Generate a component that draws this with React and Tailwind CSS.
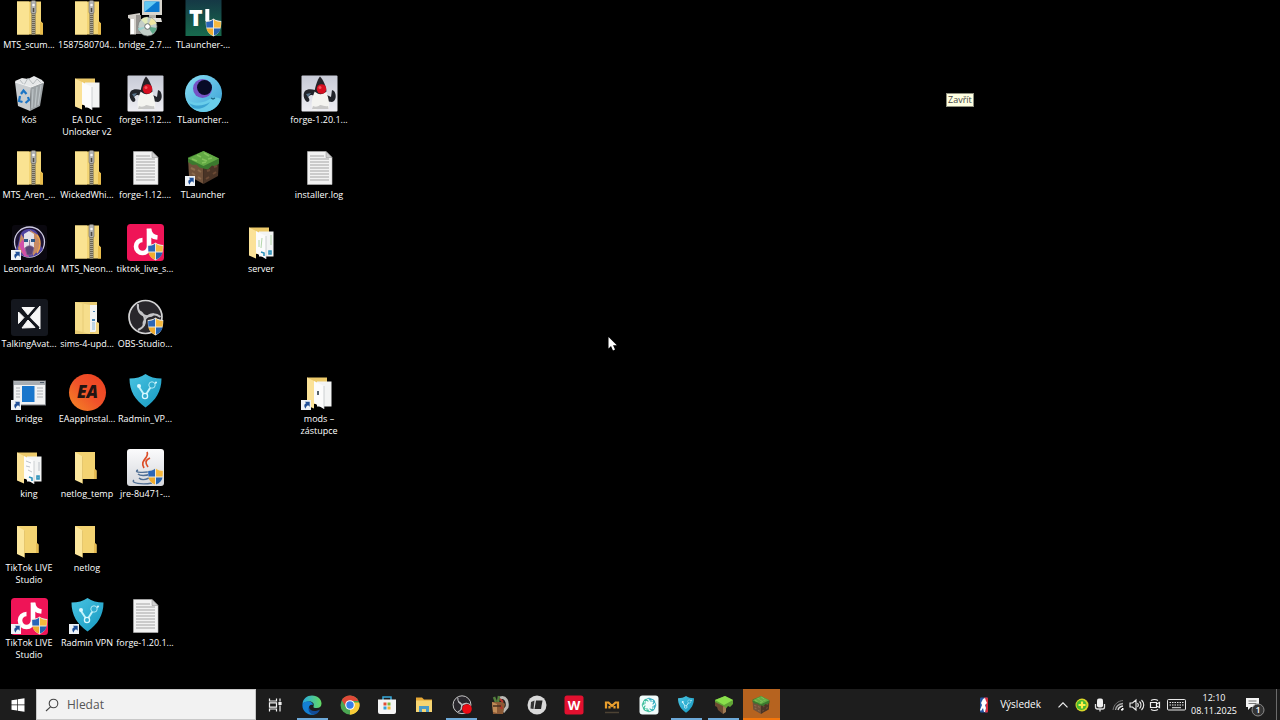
import { useState } from "react"

const Shield = () => (
    <g>
        <path d="M28.5 18.500c2.500 1.800 4.800 2.400 7.800 2.400 0 6.600-.8 11.800-7.800 15.600-7-3.800-7.800-9-7.800-15.600 3 0 5.300-.6 7.800-2.400z" fill="#e9e6dc" />
        <path d="M28 19.800v7.700h-6.600c-.2-1.700-.2-3.600-.2-5.500 2.600 0 4.800-.8 6.800-2.200z" fill="#2a66b8" />
        <path d="M29 19.800v7.700h6.600c.2-1.700.2-3.600.2-5.500-2.600 0-4.800-.8-6.800-2.200z" fill="#f5b83d" />
        <path d="M28 35.600v-7.100h-6.500c.7 3.200 2.500 5.400 6.500 7.100z" fill="#f0ac2e" />
        <path d="M29 35.600v-7.100h6.500c-.7 3.200-2.500 5.400-6.500 7.100z" fill="#2461ad" />
    </g>
)

const Shortcut = () => (
    <g>
        <rect x="0" y="26" width="10" height="10" fill="#eef2f6" />
        <path d="M3.800 27.800h4.900v4.900l-1.600-1.500c-1.400.6-2.200 1.600-2.400 3.600-2.200-2.600-1.600-4.800.6-5.500z" fill="#1f4f97" />
    </g>
)

const Zip = () => (
    <g>
        <path d="M6 1.500h24v20l2 2v11H6z" fill="#f3d575" />
        <path d="M6 1.500h12v33H6z" fill="#fae392" />
        <path d="M30 21.500l2 2v11h-3v-12z" fill="#e9bd4c" />
        <path d="M22.500 8v26.500" stroke="#6d6654" strokeWidth="4" />
        <path d="M22.500 8v26.500" stroke="#a9a593" strokeWidth="3" strokeDasharray="1 1" />
        <rect x="20" y="0.500" width="5" height="13" rx="1.500" fill="#b4b4b2" stroke="#68655e" strokeWidth="0.600" />
        <circle cx="22.500" cy="5" r="1.300" fill="#f5f5f5" />
        <rect x="21.700" y="8" width="1.600" height="4" fill="#4c4944" />
    </g>
)

const Folder = () => (
    <g>
        <path d="M6 3h20v17l1.500 1.500V30H12z" fill="#f3d372" />
        <path d="M25 20l2.500 1.500V30H25z" fill="#e5bb52" />
        <path d="M6 3l7.500 4.500v27L6 31z" fill="#fce79d" />
        <path d="M13.500 7.500v27" stroke="#dab95d" strokeWidth="0.600" />
    </g>
)

const FolderDocs = ({ kind }) => (
    <g>
        <path d="M6 3.500h20V30H6z" fill="#edca6b" />
        <path d="M16 7.500h14.500v25H16z" fill="#f3f4f4" />
        <path d="M13 7l10 5v23l-10-6z" fill="#fcfcfc" />
        <path d="M23 12v23" stroke="#b9bdc0" strokeWidth="0.700" />
        <path d="M6 3.500L13 7v27.500L6 31.500z" fill="#fbe298" />
        {kind == 'server' &&
            <g>
                <path d="M16 16v7M19 14l-1 10M28 11v10" stroke="#9fcb94" strokeWidth="0.800" />
                <path d="M18 28l3 1v3M26 27h2v3h-2z" stroke="#2f93bb" strokeWidth="1.600" fill="none" />
            </g>
        }
        {kind == 'king' &&
            <g>
                <path d="M15 12l5 2M15 17l4 1M17 21l4 2M28 13v9" stroke="#adb5bd" strokeWidth="0.800" />
                <path d="M18 28l3 1v3M26 27h2v3h-2z" stroke="#2f93bb" strokeWidth="1.600" fill="none" />
            </g>
        }
        {kind == 'mods' && <path d="M16 17h2v4h-2z" fill="#58636b" />}
    </g>
)

const FolderSims = () => (
    <g>
        <path d="M6 3h22v20l2 1v11H6z" fill="#e7cb73" />
        <path d="M21 6h7v27h-7z" fill="#f3f4f2" />
        <path d="M23 20h3v2h-3zM24 12h2v1h-2z" fill="#4a86b7" />
        <path d="M23 23h3v8h-3z" fill="#bfd5e4" />
        <path d="M6 3l15 3v29L6 31z" fill="#f6de8c" />
        <path d="M14 5v28" stroke="#e2c56d" strokeWidth="0.700" />
        <path d="M27 23l3 1.500V35h-6l3-3z" fill="#f0d47e" />
    </g>
)

const Page = () => (
    <g>
        <path d="M6.500 1.500h18.500l6 6v27h-24.500z" fill="#f2f2f2" stroke="#b9b9b9" strokeWidth="0.600" />
        <path d="M25 1.500v6h6z" fill="#d0d0d0" stroke="#8d8d8d" strokeWidth="0.500" />
        <path d="M9 6h14M9 9h19M9 12h19M9 15h19M9 18h19M9 21h19M9 24h19M9 27h19M9 30h19" stroke="#9b9b9b" strokeWidth="0.900" />
    </g>
)

const Setup = () => (
    <g>
        <rect x="15" y="0" width="20" height="15" fill="#d8d5cd" />
        <rect x="17.500" y="1.500" width="15" height="10.500" fill="#0b79cf" />
        <path d="M17.500 12V1.500H30z" fill="#62c8f2" />
        <path d="M22 15h7v3h-7z" fill="#b0ada6" />
        <path d="M16 18h18l1 4H15z" fill="#e2e0da" />
        <path d="M1 15l12-2v5l-4 1v15.500H3V19l-2-1z" fill="#d2cfc9" />
        <path d="M4 19h3v15H4z" fill="#ffffff" />
        <path d="M9 15h5v19H9z" fill="#96938f" />
        <circle cx="20.500" cy="26.500" r="9.500" fill="#c3cec8" stroke="#707774" strokeWidth="0.600" />
        <path d="M20.500 26.500L14 19.500a9.500 9.500 0 0 1 6.500-2.500z" fill="#e3ecb9" />
        <path d="M20.500 26.500l9-3a9.500 9.500 0 0 0-5-5.600z" fill="#efe7a2" />
        <path d="M20.500 26.500l9.200 1.600a9.500 9.500 0 0 1-4 6z" fill="#5fa98a" />
        <path d="M20.500 26.500L12 31a9.500 9.500 0 0 1-1-3z" fill="#9ad1cd" />
        <circle cx="20.500" cy="26.500" r="2.800" fill="#ffffff" stroke="#67706a" />
    </g>
)

const TLauncherDark = () => (
    <g>
        <defs>
            <linearGradient id="tlDark" x1="0" y1="0" x2="0" y2="1">
                <stop offset="0" stopColor="#153745" />
                <stop offset="1" stopColor="#176a4d" />
            </linearGradient>
        </defs>
        <rect x="0.500" y="-1" width="36" height="37" fill="url(#tlDark)" />
        <text x="4" y="26" className="font-['Open_Sans'] text-[23px] font-extrabold" fill="#ffffff">T</text>
        <path d="M20.300 9h4v12h-4z" fill="#ffffff" />
        <Shield />
    </g>
)

const Bin = () => (
    <g>
        <path d="M4 6l7-3 6 1 6-3 8 4 2 3-4 5H9z" fill="#e6e8e9" />
        <path d="M9 5l4 5 4-7 5 6 4-5 5 5" stroke="#a9b0b3" strokeWidth="0.800" fill="none" />
        <path d="M4 7l16 5-1 24-12-5z" fill="#c9cdd0" />
        <path d="M20 12l13-5-4 24-10 5z" fill="#9da3a6" />
        <path d="M22 14l-1 19M26 12l-2 20M30 10l-3 20" stroke="#bdc4c7" strokeWidth="1.200" />
        <path d="M4 7l16 5 13-5" stroke="#f2f3f3" fill="none" />
        <path d="M10 19l2.500-3.500 3 3.500M9 21l-1 5 3.500 1M17 22l1 3-3.500 3" stroke="#1b74c5" strokeWidth="2.200" fill="none" />
    </g>
)

const Duke = () => (
    <g>
        <defs>
            <linearGradient id="dukeBg" x1="0" y1="0" x2="0" y2="1">
                <stop offset="0" stopColor="#c7cad6" />
                <stop offset="1" stopColor="#eeeef3" />
            </linearGradient>
        </defs>
        <rect x="0.500" y="0.500" width="36" height="36" rx="1" fill="url(#dukeBg)" />
        <path d="M14 15c-4-1-8-1-10 1-2 2-2 8 2 11 3 0 3-3 1-5 3-3 5-2 8 0zM24 19l6 3 1-7 2 1c3 4 2 10-2 11l-7-1z" fill="#22242a" />
        <path d="M5 19l5-1-3 4z" fill="#58748c" />
        <path d="M14 16c-3 6-4 13-3 18 2 2 5 1 7-1 3-1 5 2 10 1 1-5-1-13-3-18z" fill="#f4f4f0" />
        <path d="M19 1.500c3 3 6 9 6.500 15-5 4-8 3-12 0 1-6 3-12 5.500-15z" fill="#242329" />
        <path d="M12 31c2 1 5 1 7-1 3 0 5 2 8 1l.500 3H11z" fill="#c8c8c7" />
        <circle cx="20.500" cy="14" r="4.800" fill="#d80f20" />
        <circle cx="19" cy="12.500" r="1.500" fill="#f4525a" />
    </g>
)

const TLauncherRing = () => (
    <g>
        <defs>
            <linearGradient id="ringBg" x1="0" y1="0" x2="1" y2="1">
                <stop offset="0" stopColor="#8be0f4" />
                <stop offset="1" stopColor="#379fd6" />
            </linearGradient>
        </defs>
        <circle cx="18.500" cy="18.500" r="18.500" fill="url(#ringBg)" />
        <path d="M1 23c5 6 15 6 22 2 5-3 9-3 13-1-2 7-9 13-17.500 13C10 37 3 31 1 23z" fill="#69cdea" />
        <path d="M4 28c7 4 15 3 21-1-4 6-11 8-17 6z" fill="#3ba4d3" />
        <circle cx="17.500" cy="13.500" r="9.500" fill="#7552c4" />
        <circle cx="19.500" cy="12.500" r="7.500" fill="#080b26" />
        <path d="M26 23l2 1 2-1" stroke="#176482" strokeWidth="1.200" fill="none" />
    </g>
)

const Block = () => (
    <g>
        <path d="M3 9l15.500 7v18L4 26z" fill="#70513a" />
        <path d="M34 9l-15.500 7v18L33 26z" fill="#4a3426" />
        <path d="M18.500 1L34 8.500v5l-4 3-3-1-4 4-4.500-1-4-1-3-3-4 .5-4.500-3v-4.500z" fill="#3b792e" />
        <path d="M18.500 1L34 8.500 18.500 16 3 8.500z" fill="#62a944" />
        <path d="M12 5l4 2M19 3l5 3M7 9l5 2M17 9l5 2M23 9l4-1M17 13l4-1" stroke="#83c35c" strokeWidth="1.500" />
        <path d="M6 18l4 2M13 20l3 2M7 23l3 2M13 27l3 2" stroke="#8b6a4c" strokeWidth="2" />
        <path d="M22 21l3-1M29 17l3-1M21 29l3-2M28 24l3-2" stroke="#6b4a34" strokeWidth="2" />
    </g>
)

const Leonardo = () => (
    <g>
        <rect x="1" y="1" width="35" height="35" rx="3" fill="#0a080f" />
        <circle cx="18.500" cy="18" r="15" fill="#1d1434" stroke="#cfcce2" strokeWidth="1.300" />
        <path d="M18 5c-7 0-9 5-10 11-1 5-2 8-4 10 4 5 9 7 14 7 6 0 11-3 14-8-3-3-3-7-4-11-1-6-4-9-10-9z" fill="#4f43a1" />
        <path d="M10 10l-3 15 6 6 1-15zM19 6l8 5 2 13-7 8-1-18z" fill="#c78b64" />
        <path d="M8 21l5 11 5 1-6-18z" fill="#d24fa9" />
        <path d="M13 10l5-3 5 3v13l-5 8-5-8z" fill="#e3e0e8" />
        <path d="M13 15h4v3h-4zM20 15h4v3h-4z" fill="#2e5888" />
        <path d="M18.500 16v6M14 24c3-3 6-3 9 0l-2 7h-5z" fill="#594375" stroke="#866b8e" strokeWidth="0.800" />
        <path d="M26 11c4 5 4 12 0 18" stroke="#eda54f" strokeWidth="1.500" fill="none" />
    </g>
)

const TikTok = () => (
    <g>
        <rect width="37" height="37" rx="3.500" fill="#ef1457" />
        <path d="M22 4.500v18a6.500 6.500 0 1 1-6.500-6.500" stroke="#ffffff" strokeWidth="4.600" fill="none" />
        <path d="M22 5c.5 5.500 3 8 8.500 8.500" stroke="#ffffff" strokeWidth="4.600" fill="none" />
        <Shield />
    </g>
)

const Avatar = () => (
    <g>
        <rect width="37" height="37" rx="3" fill="#14171e" />
        <path d="M29 7v23l-10-11.500zM7.500 13l5.500 5.500-5.500 6zM11 8.500l13 0-7 7.500zM11 29l13-.5-7-7.500z" fill="#f7f7f7" stroke="#f7f7f7" strokeLinejoin="round" />
        <path d="M8 9l20 20M27 6L8 28" stroke="#14171e" strokeWidth="1.800" />
    </g>
)

const lobes = [0, 120, 240]

const Obs = () => (
    <g>
        <circle cx="18.500" cy="18" r="16.500" fill="#29272c" stroke="#d4d4d5" strokeWidth="1.700" />
        {lobes.map((angle) => (
            <path key={angle} transform={`rotate(${angle} 18.5 18)`} d="M11 5c-1 6 2 11 8 12 3 .6 6 0 8-2" stroke="#c4c4c7" strokeWidth="2" fill="none" />
        ))}
    </g>
)

const Bridge = () => (
    <g>
        <rect x="2.500" y="7" width="32" height="24" fill="#f1f2f3" stroke="#777b80" />
        <path d="M3 9.500h31" stroke="#a8adb2" strokeWidth="3" />
        <path d="M29 8.500h4" stroke="#4d5968" />
        <rect x="11" y="12" width="12.500" height="16" fill="#1976cc" />
        <path d="M5 14h4M5 17h4M5 20h4M5 23h4M26 14h6M26 17h6M26 20h6M26 23h6" stroke="#aeb1b5" />
    </g>
)

const Ea = () => (
    <g>
        <defs>
            <linearGradient id="eaBg" x1="0" y1="1" x2="1" y2="0">
                <stop offset="0" stopColor="#f58a24" />
                <stop offset="0.500" stopColor="#f0522a" />
                <stop offset="1" stopColor="#ec4120" />
            </linearGradient>
        </defs>
        <circle cx="18.500" cy="18.500" r="18.500" fill="url(#eaBg)" />
        <text x="18.500" y="24" textAnchor="middle" className="font-['Open_Sans'] text-[17px] font-extrabold italic" fill="#211413">EA</text>
    </g>
)

const Radmin = () => (
    <g>
        <defs>
            <linearGradient id="radminBg" x1="0" y1="0" x2="1" y2="1">
                <stop offset="0" stopColor="#49c4e2" />
                <stop offset="1" stopColor="#1698c0" />
            </linearGradient>
        </defs>
        <path d="M18.500 0C23 3 28 4.500 34.500 4.500c0 13-6 22-16 29C8 26 2.500 17 2.500 4.500 9 4.500 14 3 18.500 0z" fill="url(#radminBg)" />
        <path d="M12 13l6 9 7-11" stroke="#c2f3fb" strokeWidth="2" fill="none" />
        <path d="M25 11l4-2" stroke="#c2f3fb" />
        <circle cx="12" cy="12" r="2" fill="#dcf9ff" />
        <circle cx="25" cy="11" r="3.200" fill="#30accf" stroke="#b2eaf5" />
        <circle cx="18" cy="22" r="2.600" fill="#30accf" stroke="#dcf9ff" strokeWidth="1.300" />
        <circle cx="29" cy="8.500" r="1" fill="#dcf9ff" />
    </g>
)

const Java = () => (
    <g>
        <defs>
            <linearGradient id="javaBg" x1="0" y1="0" x2="0" y2="1">
                <stop offset="0" stopColor="#fbfbfc" />
                <stop offset="1" stopColor="#d5d7dc" />
            </linearGradient>
        </defs>
        <rect width="37" height="37" rx="3" fill="url(#javaBg)" />
        <path d="M20 3c3 6-8 8-3 16M23 9c-5 2-5 5-2 9" stroke="#dc4d27" strokeWidth="1.700" fill="none" />
        <path d="M11 21c-6 3 8 3 14 1M11 25c2 2 8 2 12 0M12 29c2 2 6 2 10 0M7 31c-4 3 8 5 18 3M25 21c5-1 4 4-1 5" stroke="#516f94" strokeWidth="1.400" fill="none" />
        <Shield />
    </g>
)

const desktop = [
    { name: 'MTS_scum...', at: 'col-start-1 row-start-1', icon: <Zip /> },
    { name: 'Koš', at: 'col-start-1 row-start-2', icon: <Bin /> },
    { name: 'MTS_Aren_...', at: 'col-start-1 row-start-3', icon: <Zip /> },
    { name: 'Leonardo.AI', at: 'col-start-1 row-start-4', icon: <Leonardo />, shortcut: true },
    { name: 'TalkingAvat...', at: 'col-start-1 row-start-5', icon: <Avatar /> },
    { name: 'bridge', at: 'col-start-1 row-start-6', icon: <Bridge />, shortcut: true },
    { name: 'king', at: 'col-start-1 row-start-7', icon: <FolderDocs kind="king" /> },
    { name: 'TikTok LIVE Studio', at: 'col-start-1 row-start-8', icon: <Folder /> },
    { name: 'TikTok LIVE Studio', at: 'col-start-1 row-start-9', icon: <TikTok />, shortcut: true },
    { name: '1587580704...', at: 'col-start-2 row-start-1', icon: <Zip /> },
    { name: 'EA DLC Unlocker v2', at: 'col-start-2 row-start-2', icon: <FolderDocs /> },
    { name: 'WickedWhi...', at: 'col-start-2 row-start-3', icon: <Zip /> },
    { name: 'MTS_Neon...', at: 'col-start-2 row-start-4', icon: <Zip /> },
    { name: 'sims-4-upd...', at: 'col-start-2 row-start-5', icon: <FolderSims /> },
    { name: 'EAappInstal...', at: 'col-start-2 row-start-6', icon: <Ea /> },
    { name: 'netlog_temp', at: 'col-start-2 row-start-7', icon: <Folder /> },
    { name: 'netlog', at: 'col-start-2 row-start-8', icon: <Folder /> },
    { name: 'Radmin VPN', at: 'col-start-2 row-start-9', icon: <Radmin />, shortcut: true },
    { name: 'bridge_2.7....', at: 'col-start-3 row-start-1', icon: <Setup /> },
    { name: 'forge-1.12....', at: 'col-start-3 row-start-2', icon: <Duke /> },
    { name: 'forge-1.12....', at: 'col-start-3 row-start-3', icon: <Page /> },
    { name: 'tiktok_live_s...', at: 'col-start-3 row-start-4', icon: <TikTok /> },
    { name: 'OBS-Studio...', at: 'col-start-3 row-start-5', icon: <><Obs /><Shield /></> },
    { name: 'Radmin_VP...', at: 'col-start-3 row-start-6', icon: <Radmin /> },
    { name: 'jre-8u471-...', at: 'col-start-3 row-start-7', icon: <Java /> },
    { name: 'forge-1.20.1...', at: 'col-start-3 row-start-9', icon: <Page /> },
    { name: 'TLauncher-...', at: 'col-start-4 row-start-1', icon: <TLauncherDark /> },
    { name: 'TLauncher...', at: 'col-start-4 row-start-2', icon: <TLauncherRing /> },
    { name: 'TLauncher', at: 'col-start-4 row-start-3', icon: <Block />, shortcut: true },
    { name: 'server', at: 'col-start-5 row-start-4', icon: <FolderDocs kind="server" /> },
    { name: 'forge-1.20.1...', at: 'col-start-6 row-start-2', icon: <Duke /> },
    { name: 'installer.log', at: 'col-start-6 row-start-3', icon: <Page /> },
    { name: 'mods – zástupce', at: 'col-start-6 row-start-6', icon: <FolderDocs kind="mods" />, shortcut: true },
]

const DesktopItem = ({ item }) => (
    <button className={`flex flex-col items-center justify-start ${item.at}`}>
        <svg className="size-[37px] shrink-0 overflow-visible" viewBox="0 0 37 37" aria-hidden="true">
            {item.icon}
            {item.shortcut && <Shortcut />}
        </svg>
        <span className="mt-0.5 max-w-[58px] text-center text-[9px] leading-[12px] font-medium text-white">{item.name}</span>
    </button>
)

const EdgeIcon = () => (
    <g>
        <defs>
            <linearGradient id="edgeTop" x1="0" y1="0" x2="1" y2="0">
                <stop offset="0" stopColor="#28a9e1" />
                <stop offset="1" stopColor="#64dc62" />
            </linearGradient>
        </defs>
        <path d="M.5 9C1 3.500 5 .5 10 .5c6 0 9.500 4 9.500 8 0 3-2 4.500-5 4.500-2 0-3.500-.6-3-1.600 1-2.400-.5-5-4-5C4 6.400 1.500 7.500.5 9z" fill="url(#edgeTop)" />
        <path d="M.5 9C3 5 10.500 5.500 11 10c-3-1-4.500 1-4 4 .5 3 3 5 6 5.500C6 21-.5 16 .5 9z" fill="#1480d3" />
        <path d="M7 12c1 4 5 5.500 11 2.500-1 3-4 5-6 5-4 0-6.500-4-5-7.500z" fill="#124c98" />
    </g>
)

const ChromeIcon = () => (
    <g>
        <circle cx="10" cy="10" r="9.500" fill="#4ba653" />
        <path d="M10 10H19a9.500 9.500 0 0 1-9 9.500z" fill="#f9cc38" />
        <path d="M10 10l4.500 3-5 6.500a9.500 9.500 0 0 0 9.800-12H10z" fill="#f9cc38" />
        <path d="M1.800 5.200A9.500 9.500 0 0 1 18.500 6H10L6 12z" fill="#df4937" />
        <circle cx="10" cy="10" r="4.800" fill="#ffffff" />
        <circle cx="10" cy="10" r="3.700" fill="#397ee8" />
    </g>
)

const StoreIcon = () => (
    <g>
        <path d="M6 5V2h8v3" stroke="#37a9dc" strokeWidth="1.500" fill="none" />
        <path d="M1 4.500h18V17q0 2-2 2H3q-2 0-2-2z" fill="#f4f4f4" />
        <path d="M6.500 7.500h3v3h-3z" fill="#e24e35" />
        <path d="M10.500 7.500h3v3h-3z" fill="#80b83b" />
        <path d="M6.500 11.500h3v3h-3z" fill="#33a1d7" />
        <path d="M10.500 11.500h3v3h-3z" fill="#f3b32f" />
    </g>
)

const ExplorerIcon = () => (
    <g>
        <path d="M2 2.500h6l2 2h8V17H2z" fill="#e8a936" />
        <path d="M2 5.500h16V17H2z" fill="#f7d572" />
        <path d="M5 17v-6h10v6h-3v-3H8v3z" fill="#4c9cc8" />
    </g>
)

const BagIcon = () => (
    <g>
        <path d="M11 3c6-2 8 4 7 9l-4 5" stroke="#b9b8b4" strokeWidth="3" fill="none" />
        <path d="M3 7h11l2 2-2 10H4z" fill="#8b5935" />
        <path d="M3 7l5 2v9l-4-1z" fill="#c18c58" />
        <path d="M5 2l2 5M10 1l-1 6" stroke="#54803e" strokeWidth="2.500" />
        <path d="M11 4l3 3M11 10l2 4" stroke="#b63529" strokeWidth="2" />
        <path d="M4 11h8" stroke="#463021" strokeWidth="1.500" />
    </g>
)

const CardsIcon = () => (
    <g>
        <circle cx="10" cy="10" r="9.500" fill="#d9d9d9" />
        <path d="M4 7l3.500-1.500-1 8.500-3-.5z" fill="#333333" />
        <path d="M9 5.500h6.500l-1.500 8.500H7.500z" fill="#252525" />
    </g>
)

const WpsIcon = () => (
    <g>
        <rect x="0.500" y="0.500" width="19" height="19" rx="2.500" fill="#e2102f" />
        <text x="10" y="14.500" textAnchor="middle" className="font-['Open_Sans'] text-[13px] font-bold" fill="#ffffff">W</text>
    </g>
)

const MIcon = () => (
    <g>
        <path d="M4 13.500V7.500h2.500L10 11l3.500-3.500H16v6M7.500 11v2.500M12.500 11v2.500" stroke="#e99e2d" strokeWidth="2.200" fill="none" />
        <path d="M3 17.500h14" stroke="#4d4334" strokeWidth="1.500" />
    </g>
)

const petals = [0, 45, 90, 135, 180, 225, 270, 315]

const SwirlIcon = () => (
    <g>
        <rect x="0.500" y="0.500" width="19" height="19" rx="3" fill="#f1fcfb" />
        {petals.map((angle) => (
            <path key={angle} transform={`rotate(${angle} 10 10)`} d="M6.500 6.500C7 3.500 10 2.500 12.500 4M9.500 3.500c2 .5 3 2 2.500 3.500" stroke={angle < 180 ? '#30adc2' : '#3abf9b'} strokeWidth="1" fill="none" />
        ))}
    </g>
)

const ObsTask = () => (
    <g>
        <svg width="20" height="20" viewBox="0 0 37 37"><Obs /></svg>
        <circle cx="15" cy="14" r="4.800" fill="#ee0b14" />
    </g>
)

const SlopeIcon = () => (
    <g>
        <path d="M1 6l8 4v9l-5-4-1-3-2-1z" fill="#6d4a32" />
        <path d="M1 5l10-4 8 4v4l-3 3-2-1-3 4-2-4-8-4z" fill="#61a436" />
        <path d="M1 5l10-4 8 4-9 5z" fill="#89df4b" />
        <path d="M9 11v8l3-2v-4z" fill="#a17b52" />
    </g>
)

const tasks = [
    { name: 'Microsoft Edge', icon: <EdgeIcon />, open: true },
    { name: 'Google Chrome', icon: <ChromeIcon /> },
    { name: 'Microsoft Store', icon: <StoreIcon /> },
    { name: 'Průzkumník souborů', icon: <ExplorerIcon /> },
    { name: 'OBS Studio', icon: <ObsTask />, open: true },
    { name: 'Modpack', icon: <BagIcon /> },
    { name: 'Overlay', icon: <CardsIcon /> },
    { name: 'WPS Office', icon: <WpsIcon /> },
    { name: 'Mods', icon: <MIcon /> },
    { name: 'Asistent', icon: <SwirlIcon /> },
    { name: 'Radmin VPN', icon: <svg width="20" height="20" viewBox="0 -2 37 40"><Radmin /></svg>, open: true },
    { name: 'TLauncher', icon: <SlopeIcon />, open: true },
    { name: 'Minecraft', icon: <svg width="20" height="20" viewBox="0 -1 37 37"><Block /></svg>, active: true },
]

const TaskButton = ({ task }) => (
    <button aria-label={task.name} className={`flex flex-col items-center justify-between ${task.active ? 'bg-[#b6631f]' : ''}`}>
        <svg className="mt-1.5 size-5" viewBox="0 0 20 20" aria-hidden="true">{task.icon}</svg>
        {task.open && <span className="h-0.5 w-[31px] bg-[#6da9d8]"></span>}
        {task.active && <span className="h-0.5 w-full bg-[#f4760b]"></span>}
    </button>
)

const tray = [
    {
        name: 'Antivirus',
        icon: <>
            <circle cx="9" cy="9" r="6.500" fill="#d9d729" />
            <circle cx="8.500" cy="9" r="5" fill="#45b932" />
            <path d="M9 5.500v7M5.500 9h7" stroke="#fff04a" strokeWidth="2.200" />
        </>
    },
    {
        name: 'Mikrofon',
        icon: <>
            <rect x="6" y="2.500" width="6" height="9" rx="2" fill="#f2f2f2" />
            <path d="M4.500 8v3q0 2 2 2h5q2 0 2-2V8M9 13v2.500" stroke="#dcdcdc" strokeWidth="1.300" fill="none" />
        </>
    },
    {
        name: 'Wi-Fi',
        icon: <g fill="none" stroke="#a5a5a5">
            <path d="M4 14C5 8 9 5 14 4.500" stroke="#777777" />
            <path d="M6.500 14C7 10 10 8 14 7.500" strokeWidth="1.300" />
            <path d="M9 14c.5-2.500 2-3.500 5-4" stroke="#dddddd" strokeWidth="1.300" />
            <path d="M12 14l2-2v2z" fill="#ffffff" stroke="#ffffff" />
        </g>
    },
    {
        name: 'Hlasitost',
        icon: <g fill="none" stroke="#eeeeee" strokeWidth="1.100">
            <path d="M3 7h2.500L9 4v10l-3.500-3H3zM10.500 7c1 1.200 1 2.800 0 4M12.500 5.500c2 2 2 5 0 7M14.500 4c3 3 3 7 0 10" />
        </g>
    },
    {
        name: 'Kamera',
        icon: <g fill="none" stroke="#eeeeee" strokeWidth="1.200">
            <path d="M5.500 6.500h6v5h-6zM11.500 8l3-1.500v5l-3-1.500M6 4.500q3.500-2 7 0M6 13.500q3.500 2 7 0" />
        </g>
    },
]

const App = () => {
    const [search, setSearch] = useState('')

    return (
        <div className="flex min-h-screen flex-col overflow-hidden bg-black font-['Open_Sans','Noto_Sans',sans-serif]">
            <main className="relative flex flex-1">
                <div className="grid flex-1 grid-cols-[repeat(auto-fill,58px)] grid-rows-9 pb-4">
                    {desktop.map((item, index) => {
                        return <DesktopItem key={index} item={item} />
                    })}
                </div>

                <div role="tooltip" className="absolute top-[93px] left-[946px] border border-[#8f8f80] bg-[#ffffe1] px-px text-[9px] leading-[12px] text-[#444444]">Zavřít</div>

                <svg className="absolute top-[336px] left-[608px] h-[16px] w-[10px]" viewBox="0 0 10 16" aria-hidden="true">
                    <path d="M.5 1v11.500L3 10l2 4.500 2-.9L5 9.300h3.800z" fill="#ffffff" />
                </svg>
            </main>

            <footer className="flex h-[31px] items-stretch bg-[#1d1d1d] text-white">
                <button aria-label="Start" className="flex w-[36px] items-center justify-center">
                    <svg className="size-[14px]" viewBox="0 0 14 14" fill="#ffffff" aria-hidden="true">
                        <path d="M.5 2.200l5.500-.8v5.200H.5zM6.700 1.300L13.500.3v6.300H6.700zM.5 7.300H6v5.300l-5.500-.8zM6.700 7.300h6.800v6.400l-6.800-1z" />
                    </svg>
                </button>

                <label className="flex w-[220px] items-center gap-2 border border-[#c8c8c8] bg-[#f2f2f2] pl-2">
                    <svg className="size-[14px] shrink-0" viewBox="0 0 14 14" fill="none" stroke="#444444" strokeWidth="1.100" aria-hidden="true">
                        <circle cx="8.500" cy="5.500" r="4.300" />
                        <path d="M5.500 8.800L1 13" />
                    </svg>
                    <input aria-label="Hledat" placeholder="Hledat" value={search} onChange={(e) => setSearch(e.target.value)} className="w-full min-w-0 bg-transparent text-[12px] text-[#444444] outline-none placeholder:text-[#555555]" />
                </label>

                <nav className="grid w-[524px] grid-cols-14">
                    <button aria-label="Zobrazení úkolů" className="flex items-center justify-center">
                        <svg className="size-[14px]" viewBox="0 0 14 14" fill="none" stroke="#f2f2f2" strokeWidth="1.200" aria-hidden="true">
                            <path d="M1.500.5v2.500h7V.5M1.500 13.500V11h7v2.500M1.500 4.800h7v4.400h-7zM12 .5v3M12 7.500v6" />
                            <path d="M11 4.500h2v2h-2z" fill="#f2f2f2" />
                        </svg>
                    </button>
                    {tasks.map((task) => {
                        return <TaskButton key={task.name} task={task} />
                    })}
                </nav>

                <div className="ml-auto flex items-stretch">
                    <button className="flex items-center gap-2 text-[10px] font-medium">
                        <svg className="h-4 w-4" viewBox="0 0 16 16" aria-hidden="true">
                            <rect x="4" y="0.500" width="8" height="15" rx="1" fill="#24549f" />
                            <path d="M8 .5h3q1 0 1 1v13q0 1-1 1H9l1-6z" fill="#d92d3d" />
                            <path d="M7 2l2-1 1 3 1 2-2 2 1 3-1 4H8l-1-4-2 3-1-1 2-5-1-2z" fill="#ffffff" />
                        </svg>
                        Výsledek
                    </button>
                    <button aria-label="Zobrazit skryté ikony" className="ml-3 flex w-5 items-center justify-center">
                        <svg className="h-[6px] w-[10px]" viewBox="0 0 10 6" fill="none" stroke="#eeeeee" strokeWidth="1.200" aria-hidden="true">
                            <path d="M.5 5.300L5 .8l4.500 4.500" />
                        </svg>
                    </button>
                    {tray.map((item) => (
                        <button key={item.name} aria-label={item.name} className="flex items-center">
                            <svg className="size-[18px]" viewBox="0 0 18 18" aria-hidden="true">{item.icon}</svg>
                        </button>
                    ))}
                    <button aria-label="Dotyková klávesnice" className="ml-1 flex items-center">
                        <svg className="h-[12px] w-[19px]" viewBox="0 0 19 12" fill="none" stroke="#e8e8e8" aria-hidden="true">
                            <rect x="0.500" y="0.500" width="18" height="10.500" rx="1" />
                            <path d="M2.500 3.500h14M2.500 6h14" strokeDasharray="1.500 1" />
                            <path d="M5 8.700h9" />
                        </svg>
                    </button>
                    <button className="flex w-[56px] flex-col items-center justify-center pb-0.5 text-[9px] leading-[13px]">
                        <span>12:10</span>
                        <span>08.11.2025</span>
                    </button>
                    <button aria-label="Oznámení" className="mr-2.5 flex w-[24px] items-center">
                        <svg className="size-6" viewBox="0 0 24 24" aria-hidden="true">
                            <path d="M4 5h13v9H9l-3 3v-3H4z" fill="#f4f4f4" />
                            <path d="M6.500 8h8M6.500 10.500h8" stroke="#777777" />
                            <circle cx="16" cy="17" r="6" fill="#343434" stroke="#8b8b8b" />
                            <text x="16" y="20" textAnchor="middle" className="text-[9px] font-semibold" fill="#ffffff">1</text>
                        </svg>
                    </button>
                    <button aria-label="Zobrazit plochu" className="w-1 border-l border-[#6b6b6b]"></button>
                </div>
            </footer>
        </div>
    )
}

export default App
